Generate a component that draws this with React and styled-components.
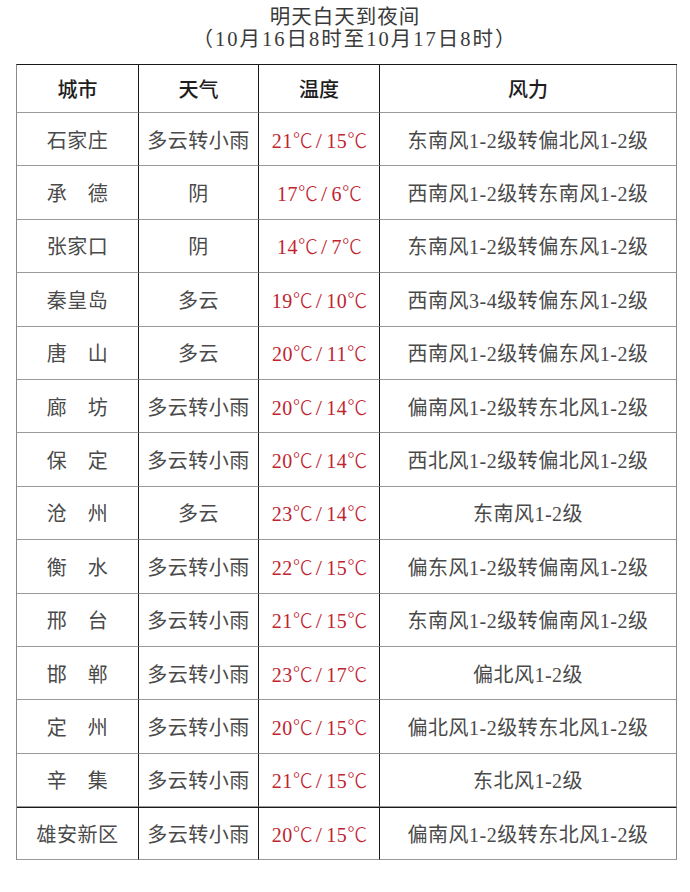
import React from 'react'
import styled, { createGlobalStyle } from 'styled-components'

const rows = [
  ['石家庄', '多云转小雨', '21℃/15℃', '东南风1-2级转偏北风1-2级'],
  ['承　德', '阴', '17℃/6℃', '西南风1-2级转东南风1-2级'],
  ['张家口', '阴', '14℃/7℃', '东南风1-2级转偏东风1-2级'],
  ['秦皇岛', '多云', '19℃/10℃', '西南风3-4级转偏东风1-2级'],
  ['唐　山', '多云', '20℃/11℃', '西南风1-2级转偏东风1-2级'],
  ['廊　坊', '多云转小雨', '20℃/14℃', '偏南风1-2级转东北风1-2级'],
  ['保　定', '多云转小雨', '20℃/14℃', '西北风1-2级转偏北风1-2级'],
  ['沧　州', '多云', '23℃/14℃', '东南风1-2级'],
  ['衡　水', '多云转小雨', '22℃/15℃', '偏东风1-2级转偏南风1-2级'],
  ['邢　台', '多云转小雨', '21℃/15℃', '东南风1-2级转偏南风1-2级'],
  ['邯　郸', '多云转小雨', '23℃/17℃', '偏北风1-2级'],
  ['定　州', '多云转小雨', '20℃/15℃', '偏北风1-2级转东北风1-2级'],
  ['辛　集', '多云转小雨', '21℃/15℃', '东北风1-2级'],
  ['雄安新区', '多云转小雨', '20℃/15℃', '偏南风1-2级转东北风1-2级'],
]

// split "21℃/15℃" so the degree sign uses the CJK glyph
function Temp({ value }) {
  const [hi, lo] = value.split('/')
  return (
    <>
      {hi.replace('℃', '')}<Degree>℃</Degree>
      <Slash>/</Slash>
      {lo.replace('℃', '')}<Degree>℃</Degree>
    </>
  )
}

function App() {
  return (
    <Page>
      <GlobalStyle />
      <Title>
        <TitleLine>明天白天到夜间</TitleLine>
        <TitleLine $wide>（10月16日8时至10月17日8时）</TitleLine>
      </Title>
      <Table>
        <colgroup>
          <col style={{ width: 122 }} />
          <col style={{ width: 120 }} />
          <col style={{ width: 121 }} />
          <col style={{ width: 297 }} />
        </colgroup>
        <thead>
          <HeadRow>
            <HeadCell>城市</HeadCell>
            <HeadCell>天气</HeadCell>
            <HeadCell>温度</HeadCell>
            <HeadCell>风力</HeadCell>
          </HeadRow>
        </thead>
        <tbody>
          {rows.map((r, i) => (
            <Row key={i} $strong={i === rows.length - 1}>
              <Cell>{r[0]}</Cell>
              <Cell>{r[1]}</Cell>
              <Cell $temp><Temp value={r[2]} /></Cell>
              <Cell>{r[3]}</Cell>
            </Row>
          ))}
        </tbody>
      </Table>
    </Page>
  )
}

export default App

const GlobalStyle = createGlobalStyle`
  html, body {
    margin: 0;
    padding: 0;
    background: #ffffff;
  }
  body {
    font-family: "Liberation Serif", "Noto Sans CJK SC", serif;
  }
`;

const Page = styled.div`
  width: 690px;
  height: 892px;
  padding-top: 6px;
  box-sizing: border-box;
`;

const Title = styled.div`
  text-align: center;
  font-size: 20.5px;
  line-height: 22px;
  color: #3a3a3a;
  margin-bottom: 14px;
`;

const TitleLine = styled.div`
  letter-spacing: ${p => (p.$wide ? '2px' : '1px')};
  padding-left: ${p => (p.$wide ? '20px' : '0')};
`;

const Table = styled.table`
  margin-left: 16px;
  width: 660px;
  table-layout: fixed;
  border-collapse: separate;
  border-spacing: 0;
  border-top: 1.5px solid #1a1a1a;
  border-left: 1px solid #8a8a8a;
`;

const HeadRow = styled.tr`
  height: 48px;
`;

const HeadCell = styled.th`
  font-size: 20px;
  font-weight: 500;
  color: #1e1e1e;
  text-align: center;
  padding: 0;
  border-bottom: 1px solid #9a9a9a;
  border-right: 1.5px solid #1a1a1a;

  &:last-child {
    border-right: 1px solid #8a8a8a;
  }
`;

const Row = styled.tr`
  height: 53.4px;

  td {
    border-top: ${p => (p.$strong ? '1.5px solid #1a1a1a' : 'none')};
  }
`;

const Cell = styled.td`
  font-size: 20px;
  letter-spacing: 0.5px;
  color: ${p => (p.$temp ? '#c0242f' : '#4a4a4a')};
  text-align: center;
  padding: 0;
  white-space: nowrap;
  border-bottom: 1px solid #9a9a9a;
  border-right: 1.5px solid #1a1a1a;

  &:last-child {
    border-right: 1px solid #8a8a8a;
  }
`;

const Degree = styled.span`
  font-family: "Noto Sans CJK SC", sans-serif;
  font-weight: 300;
  letter-spacing: -1px;
`;

const Slash = styled.span`
  font-size: 22px;
  margin: 0 4px 0 4px;
`;
